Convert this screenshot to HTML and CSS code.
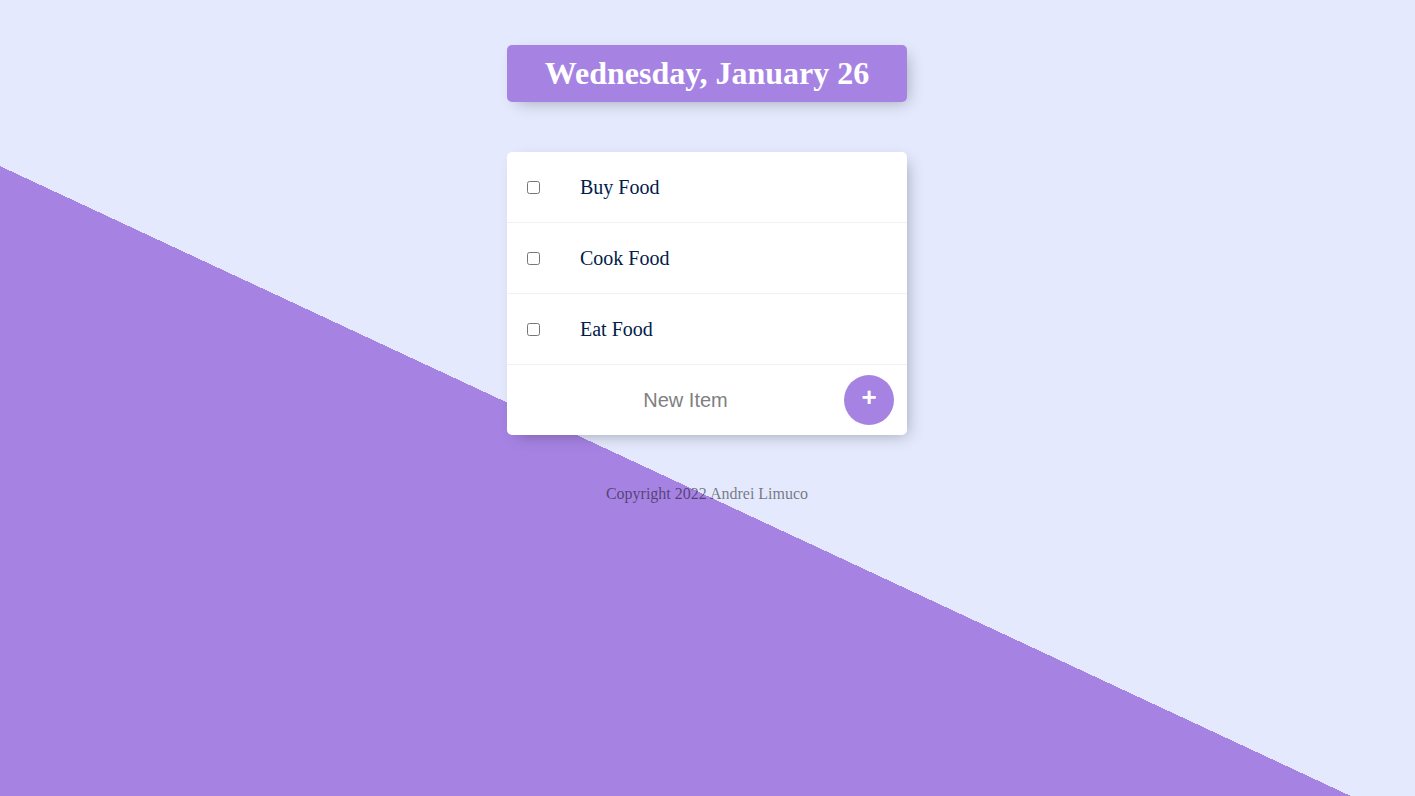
FILE: index.html
```html
<!DOCTYPE html>
<html lang="en">
<head>
<meta charset="utf-8">
<title>To-Do List</title>
<link rel="stylesheet" href="styles.css">
</head>
<body>
  <div class="box heading">
    <h1 class="title">Wednesday, January 26</h1>
  </div>
  <div class="box list">
    <div class="item">
      <input class="check" type="checkbox">
      <p class="label">Buy Food</p>
    </div>
    <div class="item">
      <input class="check" type="checkbox">
      <p class="label">Cook Food</p>
    </div>
    <div class="item">
      <input class="check" type="checkbox">
      <p class="label">Eat Food</p>
    </div>
    <form class="item new-form">
      <input class="new-input" type="text" name="newItem" placeholder="New Item" autocomplete="off">
      <button class="add-btn" type="submit" name="list">+</button>
    </form>
  </div>
  <footer class="footer">Copyright 2022 Andrei Limuco</footer>
</body>
</html>
```
FILE: styles.css
```css
html {
  background-color: #E4E9FD;
  background-image: linear-gradient(25deg, #A683E3 50%, #E4E9FD 50%);
  background-size: 100% 992px;
  background-repeat: no-repeat;
  min-height: 100%;
}

body {
  margin: 0;
  padding: 45px 8px 0 7px;
  font-family: "Liberation Serif", "Times New Roman", serif;
}

.box {
  width: 400px;
  margin: 0 auto;
  background: #fff;
  border-radius: 5px;
  box-shadow: 5px 5px 15px -5px rgba(0, 0, 0, 0.3);
}

.heading {
  background-color: #A683E3;
  text-align: center;
}

.title {
  margin: 0;
  padding: 10px;
  color: #fff;
  font-size: 32px;
  font-weight: bold;
  line-height: 37px;
}

.list {
  margin-top: 50px;
}

.item {
  min-height: 70px;
  display: flex;
  align-items: center;
  border-bottom: 1px solid #F1F1F1;
}

.item:last-child {
  border-bottom: 0;
}

.check {
  margin: 20px;
  width: 13px;
  height: 13px;
}

.label {
  margin: 0;
  padding: 20px;
  font-size: 20px;
  line-height: 23px;
  color: #00204a;
}

.new-form {
  margin: 0 0 0 20px;
  text-align: center;
}

.new-input {
  text-align: center;
  height: 60px;
  padding: 1px 2px;
  border: none;
  background: transparent;
  font-family: "Liberation Sans", Arial, sans-serif;
  font-size: 20px;
  width: 313px;
  box-sizing: content-box;
}

.new-input:focus {
  outline: none;
}

.new-input::placeholder {
  color: grey;
  opacity: 1;
}

.add-btn {
  min-height: 50px;
  width: 50px;
  height: 50px;
  border-radius: 50%;
  border: 0;
  background-color: #A683E3;
  color: #fff;
  font-family: "Liberation Sans", Arial, sans-serif;
  font-size: 26px;
  font-weight: bold;
  line-height: 30px;
  padding: 0 0 6px;
  cursor: pointer;
}

.footer {
  margin-top: 50px;
  text-align: center;
  color: rgba(0, 0, 0, 0.5);
  font-size: 16px;
  line-height: 18px;
}
```
